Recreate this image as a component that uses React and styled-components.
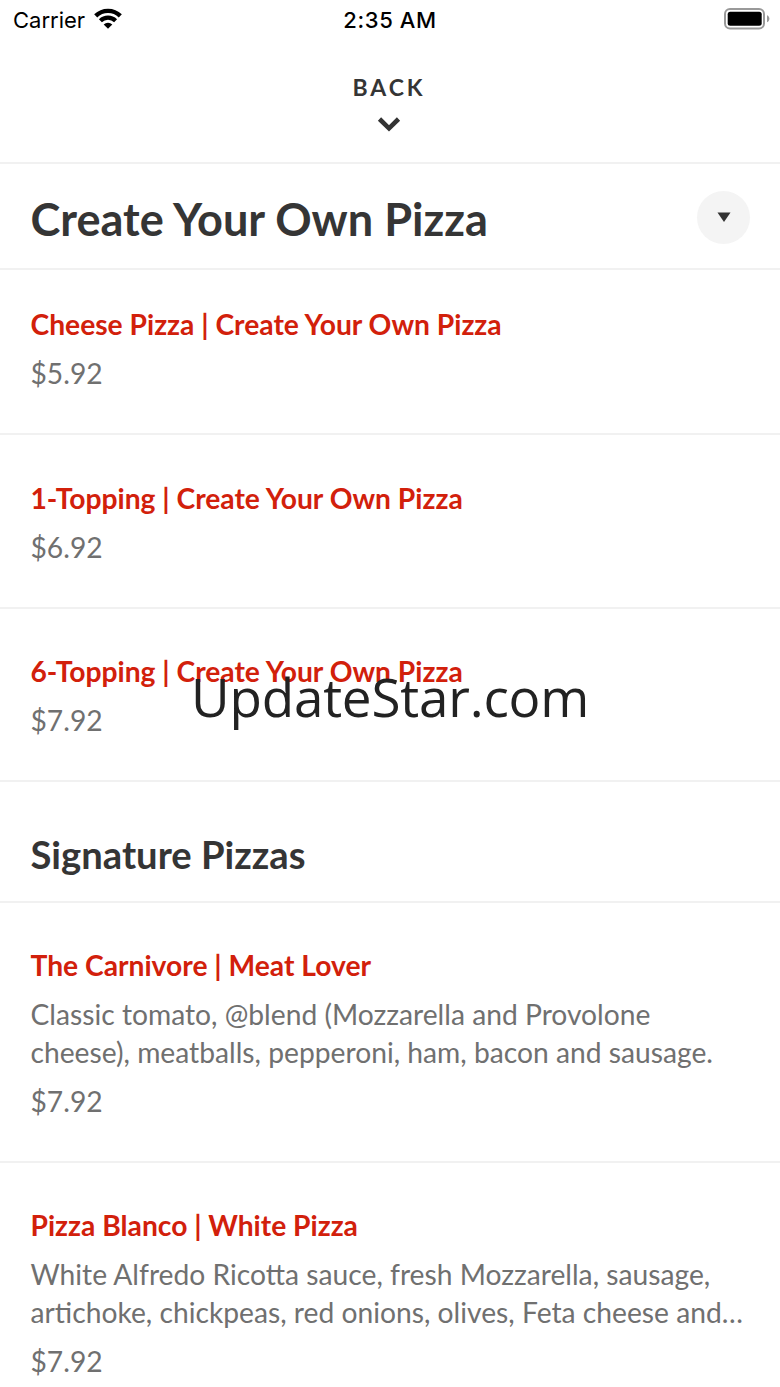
import React, { Component } from 'react'
import styled, { createGlobalStyle } from 'styled-components'

const toppings = [
  { name: 'Cheese Pizza | Create Your Own Pizza', price: '$5.92', height: 165 },
  { name: '1-Topping | Create Your Own Pizza', price: '$6.92', height: 174 },
  { name: '6-Topping | Create Your Own Pizza', price: '$7.92', height: 173 },
]

const signatures = [
  {
    name: 'The Carnivore | Meat Lover',
    lines: [
      'Classic tomato, @blend (Mozzarella and Provolone',
      'cheese), meatballs, pepperoni, ham, bacon and sausage.',
    ],
    price: '$7.92',
    height: 260,
  },
  {
    name: 'Pizza Blanco | White Pizza',
    lines: [
      'White Alfredo Ricotta sauce, fresh Mozzarella, sausage,',
      'artichoke, chickpeas, red onions, olives, Feta cheese and…',
    ],
    price: '$7.92',
    height: 260,
  },
]

const WifiIcon = () => (
  <svg width="28" height="21" viewBox="0 0 28 21">
    <path d="M14 20.800l-4.300-4.300a6 6 0 0 1 8.600 0z" />
    <path d="M6.400 12.700a10.800 10.800 0 0 1 15.200 0" fill="none" stroke="#000" strokeWidth="4.200" />
    <path d="M1.700 7.900a17.600 17.600 0 0 1 24.600 0" fill="none" stroke="#000" strokeWidth="4.400" />
  </svg>
)

const BatteryIcon = () => (
  <svg width="46" height="22" viewBox="0 0 46 22">
    <rect x="1" y="1" width="39" height="19.500" rx="5" fill="none" stroke="#999" strokeWidth="2" />
    <rect x="3.700" y="3.700" width="34" height="14" rx="2.500" />
    <path d="M43 7.300v7c3.200-1.300 3.200-5.700 0-7z" fill="#999" />
  </svg>
)

const MenuItem = ({ item }) => (
  <Item $height={item.height}>
    <ItemName>{item.name}</ItemName>
    {item.lines && (
      <Description>
        {item.lines.map(line => <div key={line}>{line}</div>)}
      </Description>
    )}
    <Price>{item.price}</Price>
  </Item>
)

class App extends Component {
  render() {
    return (
      <Screen>
        <GlobalStyle />
        <StatusBar>
          <Carrier>Carrier <WifiIcon /></Carrier>
          <Clock>2:35 AM</Clock>
          <Battery><BatteryIcon /></Battery>
        </StatusBar>
        <BackBar>
          <BackLabel>BACK</BackLabel>
          <svg width="24" height="16" viewBox="0 0 24 16">
            <path d="M2.500 3L12 12.300L21.500 3" fill="none" stroke="#333" strokeWidth="4.600" />
          </svg>
        </BackBar>
        <Header>
          <Title>Create Your Own Pizza</Title>
          <RoundButton>
            <svg width="14" height="10" viewBox="0 0 14 10">
              <path d="M0.500 0.500h13L7 10z" fill="#333" />
            </svg>
          </RoundButton>
        </Header>
        {toppings.map(t => <MenuItem key={t.name} item={t} />)}
        <Section>Signature Pizzas</Section>
        {signatures.map(t => <MenuItem key={t.name} item={t} />)}
        <Watermark>UpdateStar.com</Watermark>
      </Screen>
    )
  }
}

export default App

const GlobalStyle = createGlobalStyle`
  body {
    margin: 0;
    background: white;
  }
`

const Screen = styled.div`
  position: relative;
  width: 780px;
  height: 1387px;
  overflow: hidden;
  background: white;
  color: #353535;
  font-family: Lato, sans-serif;
`

const StatusBar = styled.div`
  display: grid;
  grid-template-columns: 1fr auto 1fr;
  align-items: center;
  height: 40px;
  padding: 0 10px 0 13px;
  color: black;
  font-family: Inter, sans-serif;
  font-size: 22px;
`

const Carrier = styled.div`
  display: flex;
  align-items: center;
  gap: 9px;

  svg {
    margin-top: -3px;
  }
`

const Clock = styled.div`
  margin-right: 3px;
  font-weight: 500;
  letter-spacing: 0.6px;
`

const Battery = styled.div`
  display: flex;
  justify-content: flex-end;
  padding-bottom: 2px;
`

const BackBar = styled.div`
  display: flex;
  flex-direction: column;
  align-items: center;
  box-sizing: border-box;
  height: 124px;
  padding: 33px 2px 0 0;
  border-bottom: 2px solid #f1f1f1;
`

const BackLabel = styled.div`
  height: 43px;
  font-size: 23px;
  font-weight: 700;
  line-height: 28px;
  letter-spacing: 2.9px;
`

const Header = styled.div`
  display: flex;
  align-items: center;
  justify-content: space-between;
  box-sizing: border-box;
  height: 106px;
  padding: 2px 30px 0 30.5px;
  border-bottom: 2px solid #f1f1f1;
`

const Title = styled.div`
  padding-top: 2px;
  font-size: 45.1px;
  font-weight: 700;
`

const RoundButton = styled.div`
  display: flex;
  align-items: center;
  justify-content: center;
  width: 53px;
  height: 53px;
  border-radius: 50%;
  background: #f4f4f4;
`

const Item = styled.div`
  display: flex;
  flex-direction: column;
  justify-content: flex-end;
  box-sizing: border-box;
  height: ${props => props.$height}px;
  padding: 0 30px 41px 30.5px;
  border-bottom: 2px solid #f1f1f1;
  font-size: 28.23px;
  line-height: 38px;
  white-space: nowrap;
`

const ItemName = styled.div`
  color: #d2200b;
  font-weight: 700;
`

const Description = styled.div`
  margin-top: 11px;
  color: #707070;
`

const Price = styled.div`
  margin-top: 11px;
  color: #707070;
`

const Section = styled.div`
  box-sizing: border-box;
  height: 121px;
  padding: 48px 30px 0 30.5px;
  border-bottom: 2px solid #f1f1f1;
  font-size: 38.2px;
  font-weight: 700;
  line-height: 48px;
`

const Watermark = styled.div`
  position: absolute;
  top: 659px;
  left: 191px;
  color: #222;
  font-family: "Open Sans", sans-serif;
  font-size: 53px;
  line-height: 76px;
  letter-spacing: -0.2px;
`
